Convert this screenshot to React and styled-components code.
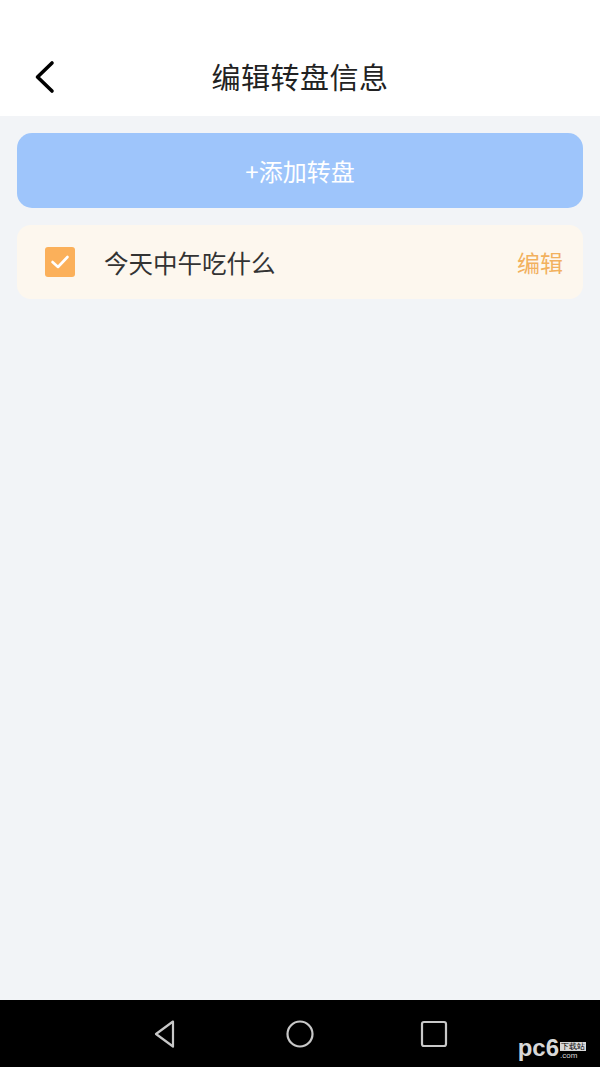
import React from 'react'
import styled, { createGlobalStyle } from 'styled-components'

const GlobalStyle = createGlobalStyle`
  html, body {
    margin: 0;
    padding: 0;
    background: #f2f4f7;
  }
  body {
    font-family: "Noto Sans CJK SC", "Noto Sans", sans-serif;
  }
`

const Screen = styled.div`
  width: 600px;
  height: 1067px;
  display: flex;
  flex-direction: column;
  background: #f2f4f7;
`

const Header = styled.header`
  height: 116px;
  background: #ffffff;
  display: flex;
  align-items: flex-end;
  flex-shrink: 0;
`

const TitleBar = styled.div`
  flex: 1;
  height: 76px;
  display: flex;
  align-items: center;
  justify-content: center;
  position: relative;
  padding-bottom: 2px;
`

const BackButton = styled.button`
  position: absolute;
  left: 30px;
  top: 21px;
  width: 30px;
  height: 36px;
  border: none;
  background: none;
  padding: 0;
  display: flex;
  align-items: center;
  justify-content: center;
`

const Title = styled.h1`
  margin: 0;
  font-size: 29px;
  font-weight: 400;
  color: #222;
  letter-spacing: 0.5px;
`

const Content = styled.main`
  flex: 1;
  padding: 17px 17px 0;
  display: flex;
  flex-direction: column;
  gap: 17px;
`

const AddButton = styled.button`
  height: 75px;
  border: none;
  border-radius: 15px;
  background: #9ec5fb;
  color: #ffffff;
  font-family: inherit;
  font-size: 24px;
  display: flex;
  align-items: center;
  justify-content: center;
`

const Card = styled.div`
  height: 74px;
  border-radius: 14px;
  background: #fdf7ee;
  display: flex;
  align-items: center;
  padding: 0 20px 0 28px;
`

const Check = styled.span`
  width: 30px;
  height: 30px;
  border-radius: 3px;
  background: #fbb05a;
  display: flex;
  align-items: center;
  justify-content: center;
`

const CardLabel = styled.span`
  flex: 1;
  margin-left: 29px;
  font-size: 24.5px;
  color: #333;
`

const EditLink = styled.span`
  font-size: 23px;
  color: #f2b15e;
`

const NavBar = styled.nav`
  height: 67px;
  background: #000;
  display: flex;
  align-items: center;
  justify-content: center;
  gap: 104px;
  position: relative;
  flex-shrink: 0;
`

const Watermark = styled.div`
  position: absolute;
  right: 14px;
  bottom: 7px;
  display: flex;
  align-items: flex-end;
  color: #d8d8d8;
  font-family: "Liberation Sans", sans-serif;
`

const WmBig = styled.span`
  font-size: 24px;
  font-weight: 700;
  line-height: 1;
`

const WmSmall = styled.span`
  display: flex;
  flex-direction: column;
  font-size: 8px;
  line-height: 1.15;
  margin-left: 1px;
`

const WmTag = styled.span`
  background: #d8d8d8;
  color: #000;
  padding: 0 1px;
`

export default function App() {
  return (
    <>
      <GlobalStyle />
      <Screen>
        <Header>
          <TitleBar>
            <BackButton aria-label="返回">
              <svg width="24" height="34" viewBox="0 0 24 34">
                <path d="M19 3 L4.5 17 L19 31" fill="none" stroke="#000" strokeWidth="3.6" strokeLinecap="round" strokeLinejoin="round" />
              </svg>
            </BackButton>
            <Title>编辑转盘信息</Title>
          </TitleBar>
        </Header>
        <Content>
          <AddButton>+添加转盘</AddButton>
          <Card>
            <Check>
              <svg width="20" height="16" viewBox="0 0 20 16">
                <path d="M2.5 8 L8 13 L17.5 3" fill="none" stroke="#fff" strokeWidth="2.6" strokeLinecap="round" strokeLinejoin="round" />
              </svg>
            </Check>
            <CardLabel>今天中午吃什么</CardLabel>
            <EditLink>编辑</EditLink>
          </Card>
        </Content>
        <NavBar>
          <svg width="30" height="30" viewBox="0 0 30 30">
            <path d="M22 2.5 L5 15 L22 27.5 Z" fill="none" stroke="#c8c8c8" strokeWidth="2.2" strokeLinejoin="round" />
          </svg>
          <svg width="30" height="30" viewBox="0 0 30 30">
            <circle cx="15" cy="15" r="12.5" fill="none" stroke="#c8c8c8" strokeWidth="2.2" />
          </svg>
          <svg width="30" height="30" viewBox="0 0 30 30">
            <rect x="3" y="3" width="24" height="24" rx="2" fill="none" stroke="#c8c8c8" strokeWidth="2.2" />
          </svg>
          <Watermark>
            <WmBig>pc6</WmBig>
            <WmSmall>
              <WmTag>下载站</WmTag>
              <span>.com</span>
            </WmSmall>
          </Watermark>
        </NavBar>
      </Screen>
    </>
  )
}
